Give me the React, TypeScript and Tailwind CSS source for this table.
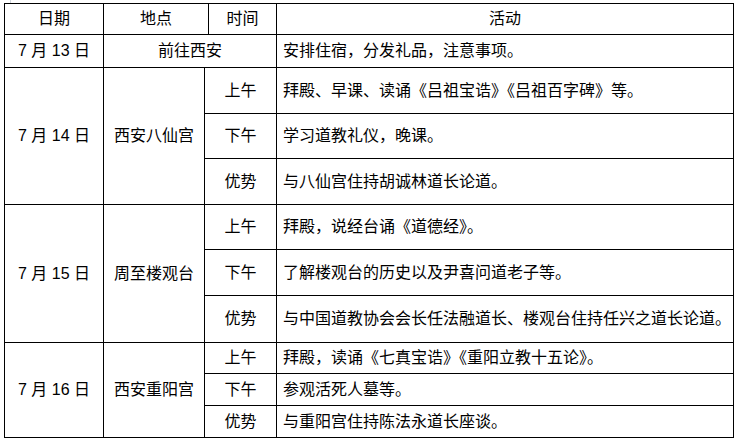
const font = { fontFamily: '"Liberation Sans", "Noto Sans CJK SC", sans-serif' }

type Sub = { time: string; text: string; h: string }
type Block = { date: string; place: string; h: string; subs: Sub[] }

const blocks: Block[] = [
  {
    date: "7 月 14 日",
    place: "西安八仙宫",
    h: "h-[137px]",
    subs: [
      { time: "上午", text: "拜殿、早课、读诵《吕祖宝诰》《吕祖百字碑》等。", h: "h-[46px]" },
      { time: "下午", text: "学习道教礼仪，晚课。", h: "h-[45px]" },
      { time: "优势", text: "与八仙宫住持胡诚林道长论道。", h: "flex-1" },
    ],
  },
  {
    date: "7 月 15 日",
    place: "周至楼观台",
    h: "h-[138px]",
    subs: [
      { time: "上午", text: "拜殿，说经台诵《道德经》。", h: "h-[45px]" },
      { time: "下午", text: "了解楼观台的历史以及尹喜问道老子等。", h: "h-[46px]" },
      { time: "优势", text: "与中国道教协会会长任法融道长、楼观台住持任兴之道长论道。", h: "flex-1" },
    ],
  },
  {
    date: "7 月 16 日",
    place: "西安重阳宫",
    h: "h-[95px]",
    subs: [
      { time: "上午", text: "拜殿，读诵《七真宝诰》《重阳立教十五论》。", h: "h-[31px]" },
      { time: "下午", text: "参观活死人墓等。", h: "h-[32px]" },
      { time: "优势", text: "与重阳宫住持陈法永道长座谈。", h: "flex-1" },
    ],
  },
]

export default function App() {
  return (
    <div className="w-[736px] h-[440px] bg-white text-black text-[16px] leading-none" style={font}>
      <div className="h-[3px] ml-[10px] w-px bg-gray-300" />
      <div className="ml-[4px] w-[730px] border-l border-t border-r border-black">
        {/* header */}
        <div className="flex h-[31px] border-b border-black">
          <div className="w-[99px] border-r border-black flex items-center justify-center">日期</div>
          <div className="w-[105px] border-r border-black flex items-center justify-center">地点</div>
          <div className="w-[68px] border-r border-black flex items-center justify-center">时间</div>
          <div className="flex-1 flex items-center justify-center">活动</div>
        </div>
        <div className="flex h-[33px] border-b border-black">
          <div className="w-[99px] border-r border-black flex items-center justify-center">7 月 13 日</div>
          <div className="w-[173px] border-r border-black flex items-center justify-center">前往西安</div>
          <div className="flex-1 flex items-center pl-[6px]">安排住宿，分发礼品，注意事项。</div>
        </div>
        {blocks.map((b) => (
          <div key={b.date} className={`flex border-b border-black ${b.h}`}>
            <div className="w-[99px] border-r border-black flex items-center justify-center">{b.date}</div>
            <div className="w-[101px] border-r border-black flex items-center justify-center">{b.place}</div>
            <div className="flex-1 flex flex-col">
              {b.subs.map((s, i) => (
                <div
                  key={s.time}
                  className={`flex ${s.h} ${i < b.subs.length - 1 ? "border-b border-black" : ""}`}
                >
                  <div className="w-[72px] border-r border-black flex items-center justify-center">{s.time}</div>
                  <div className="flex-1 flex items-center pl-[6px] whitespace-nowrap">{s.text}</div>
                </div>
              ))}
            </div>
          </div>
        ))}
      </div>
    </div>
  )
}
